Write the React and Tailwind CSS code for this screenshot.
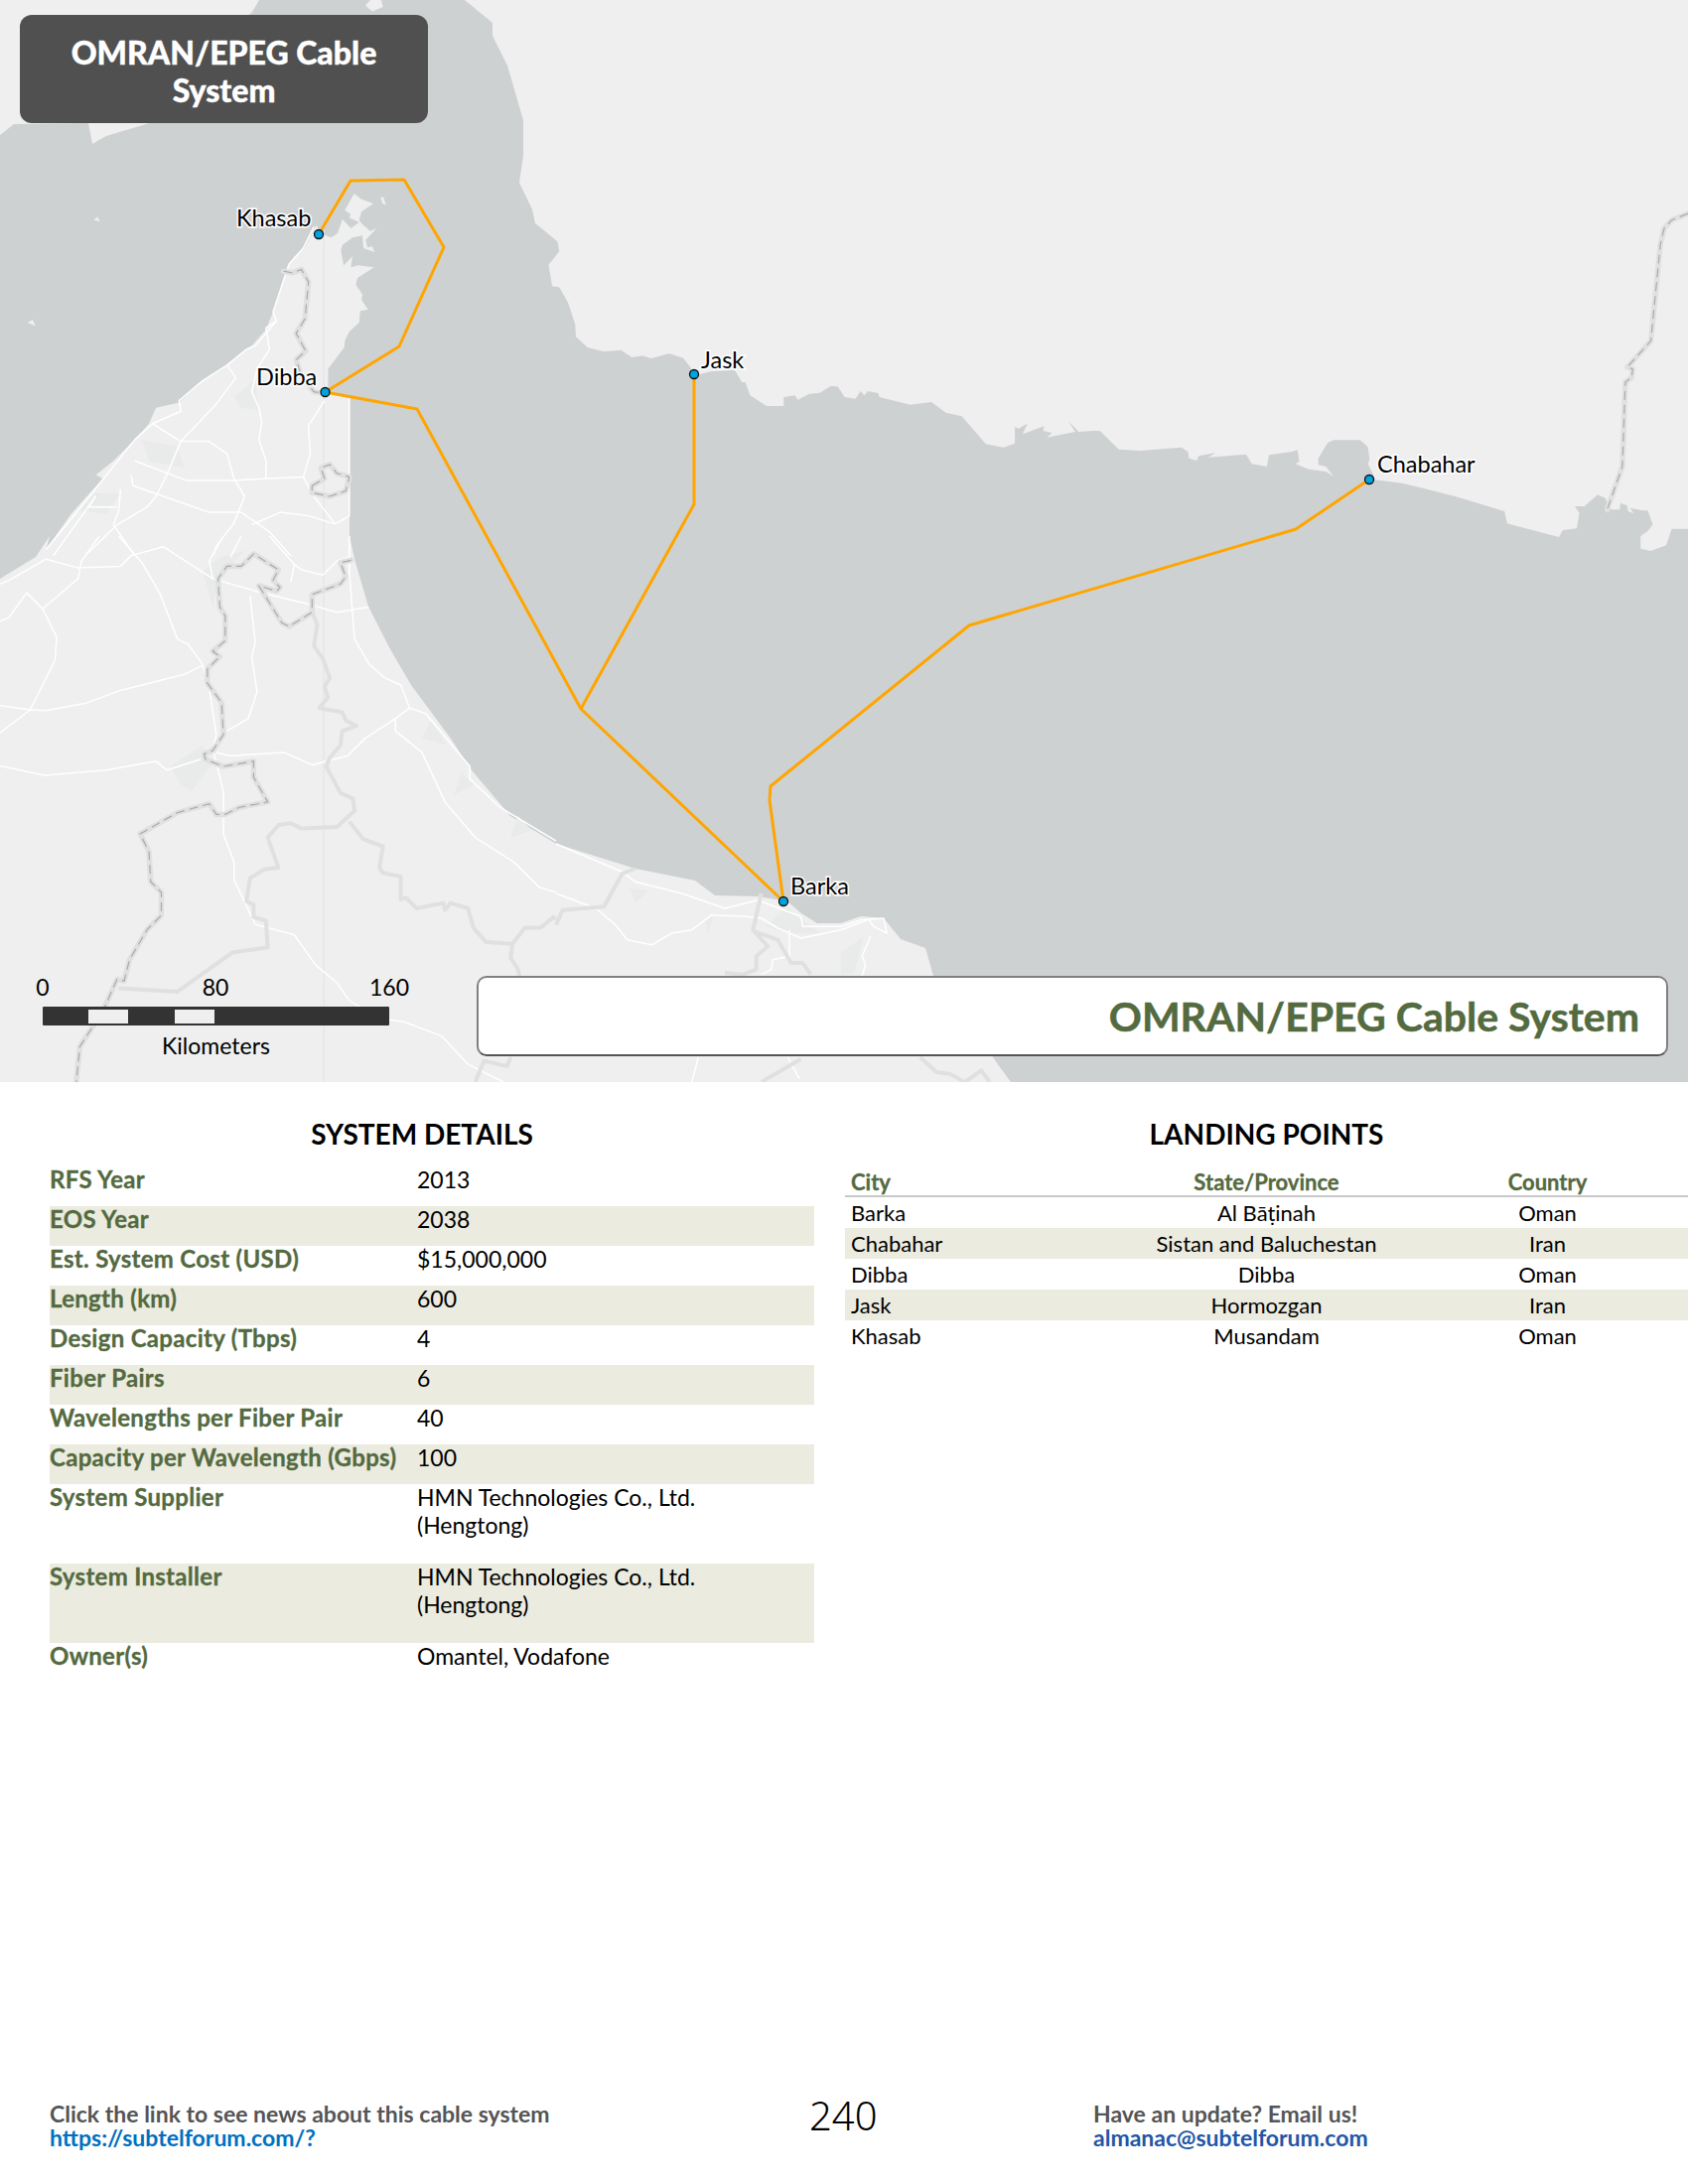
const font = { fontFamily: 'Lato, "Noto Sans", sans-serif' }

// helpers: the coordinates below were read off enlarged crops of the map
const z1 = pts => pts.map(([x, y]) => [x / 2.8, y / 2.8])
const z2 = pts => pts.map(([x, y]) => [x / 2.8, y / 2.8 + 540])
const z7 = pts => pts.map(([x, y]) => [1100 + x / 2.613, 180 + y / 3])
const z8 = pts => pts.map(([x, y]) => [560 + x / 3, 800 + y / 3])
const zA = pts => pts.map(([x, y]) => [290 + x / 3, 180 + y / 3])
const zB = pts => pts.map(([x, y]) => [540 + x / 2.8, 230 + y / 3])
const line = pts => 'M' + pts.map(p => p[0].toFixed(1) + ' ' + p[1].toFixed(1)).join('L')
const poly = pts => line(pts) + 'Z'

const water = [
  [468, 0], [496, 23], [496, 36], [511, 66], [527, 121], [527, 157], [523, 184], [536, 211], [539, 225],
  ...zB([[15, 0], [60, 40], [65, 70], [35, 110], [45, 175], [65, 178], [90, 225], [110, 290], [112, 328], [145, 360], [190, 372], [240, 368],
    [270, 390], [300, 385], [325, 393], [375, 378], [415, 392], [435, 420], [447, 445], [495, 432], [560, 428], [580, 465], [590, 465], [603, 505],
    [650, 537], [698, 537], [698, 510], [730, 505], [738, 518], [770, 500], [800, 497], [830, 477], [850, 478], [870, 510], [900, 515], [915, 492],
    [925, 505], [935, 492], [965, 498], [968, 510], [1055, 533], [1115, 525], [1155, 557], [1200, 568], [1268, 652], [1318, 662], [1350, 650],
    [1350, 600], [1360, 605], [1385, 590], [1372, 622], [1432, 598], [1430, 612], [1455, 618], [1440, 632], [1520, 615], [1500, 582], [1530, 615], [1568, 612]]),
  ...z7([[20, 762], [70, 818], [125, 822], [235, 812], [252, 825], [255, 845], [275, 852], [280, 838], [325, 828], [305, 842],
    [405, 833], [420, 862], [460, 870], [465, 835], [525, 825], [540, 820], [545, 855], [535, 862], [570, 878], [615, 885], [635, 900],
    [615, 870], [595, 865], [595, 845], [620, 797], [635, 790], [705, 790], [725, 810], [730, 850], [725, 860], [738, 890], [745, 910],
    [815, 920], [870, 935], [955, 960], [1085, 1005], [1092, 1042], [1228, 1083], [1238, 1062], [1275, 1057], [1282, 1010], [1270, 990],
    [1295, 990], [1330, 955], [1350, 965], [1365, 1000], [1388, 1000], [1390, 980], [1408, 988], [1410, 1005], [1425, 1012], [1415, 995],
    [1450, 1003], [1462, 1003], [1475, 1045], [1462, 1065], [1443, 1080], [1443, 1118], [1470, 1125], [1510, 1108], [1525, 1058], [1568, 1058]]),
  [1700, 1090], [1018, 1090], [1007, 1075], [1000, 1065], [940, 983], [932, 955], [907, 946], [890, 925], [867, 923], [847, 930], [823, 930],
  [807, 920], [793, 908], [763, 903], [720, 902], [700, 887], [640, 875], [560, 850], [514, 822], [475, 776], [454, 744], [414, 690],
  [393, 654], [371, 611], [357, 563], [352, 540], [352, 400],
  ...z1([[925, 1110], [925, 1040]]),
  ...zA([[170, 510], [172, 490], [185, 462], [215, 435], [218, 400], [242, 395], [222, 365], [225, 350], [205, 320], [210, 300], [260, 268], [212, 262],
    [190, 268], [195, 235], [168, 262], [160, 215], [165, 200], [195, 178], [225, 172], [228, 210], [262, 222], [255, 205], [240, 208], [235, 185],
    [268, 150], [248, 158], [222, 135], [215, 125], [222, 100], [258, 75], [222, 62], [200, 45], [172, 95], [190, 108], [185, 118], [215, 132],
    [190, 150], [165, 122], [150, 165], [130, 178], [100, 165], [85, 140], [50, 210], [20, 235], [0, 265]]),
  ...z1([[800, 790], [770, 880], [750, 930], [710, 975], [640, 1030],
    [570, 1075], [505, 1135], [440, 1150], [420, 1195], [380, 1240], [320, 1300], [270, 1340], [290, 1350], [200, 1450], [130, 1550]]),
  [50, 540], [36, 561], [0, 583], [0, 136], [14, 125], [89, 124], [93, 145], [107, 137], [154, 123], [200, 60], [254, 12], [261, 0],
]

const islands = [
  z1([[1030, 15], [1045, 0], [1075, 0], [1080, 20], [1050, 32]]),
  z1([[265, 620], [275, 612], [282, 625]]),
  z1([[78, 910], [92, 902], [100, 920]]),
  z7([[1305, 935], [1315, 925], [1325, 960], [1315, 955]]),
  zA([[280, 58], [288, 55], [296, 80], [286, 75]]),
]

const patches = [
  z1([[660, 1120], [720, 1070], [730, 1160], [680, 1150]]),
  z1([[400, 1240], [500, 1260], [520, 1320], [420, 1300]]),
  z1([[270, 1390], [340, 1390], [300, 1450], [220, 1440]]),
  z2([[480, 650], [570, 590], [600, 640], [540, 720], [510, 700]]),
  z2([[570, 100], [620, 60], [690, 40], [620, 120], [600, 200]]),
  z2([[1190, 570], [1215, 520], [1260, 590]]),
  z2([[1280, 730], [1300, 670], [1340, 700]]),
  z2([[1440, 850], [1460, 790], [1500, 830]]),
  z8([[220, 285], [280, 290], [240, 330]]),
  z8([[450, 380], [475, 370], [460, 425]]),
  z8([[630, 400], [700, 340], [740, 380], [800, 420], [700, 420]]),
  z8([[860, 480], [930, 430], [900, 540], [860, 545]]),
]

const roads = [
  z1([[885, 640], [855, 700], [815, 745], [800, 790], [770, 880], [780, 905], [750, 925], [760, 985], [725, 1040], [710, 1105], [730, 1150], [738, 1190], [730, 1240], [750, 1300], [750, 1350]]),
  z1([[780, 905], [720, 975], [695, 985], [640, 1030], [570, 1075], [505, 1130], [510, 1160], [430, 1195], [380, 1240], [300, 1340], [220, 1440], [130, 1550]]),
  z1([[640, 1030], [665, 1065], [610, 1140], [510, 1245], [590, 1245], [640, 1280], [660, 1350], [690, 1400], [660, 1475], [610, 1540], [600, 1568]]),
  z1([[430, 1195], [510, 1245], [470, 1340], [440, 1400], [415, 1430], [330, 1480], [240, 1568]]),
  z1([[380, 1300], [525, 1355], [660, 1355], [750, 1350], [855, 1345], [885, 1400], [945, 1478]]),
  z1([[915, 1130], [870, 1200], [875, 1280], [855, 1345]]),
  z1([[370, 1340], [375, 1370], [590, 1445], [680, 1445], [760, 1500], [820, 1568]]),
  z1([[340, 1380], [335, 1440], [320, 1480], [380, 1568]]),
  z1([[270, 1400], [250, 1430], [330, 1430]]),
  z1([[270, 1400], [150, 1568]]),
  z1([[945, 1478], [985, 1455], [985, 1120]]),
  z1([[710, 1480], [790, 1445], [870, 1455], [945, 1478]]),
  z2([[0, 135], [25, 125], [130, 65], [220, 90], [340, 85], [370, 55], [460, 30], [600, 120], [720, 155], [880, 195], [950, 215], [1040, 200]]),
  z2([[335, 0], [400, 75], [450, 160], [500, 290], [530, 305], [570, 360], [590, 430], [610, 560], [600, 600], [630, 720], [630, 840], [660, 920], [660, 970], [720, 1095], [830, 1125], [890, 1210], [950, 1260], [985, 1310], [1070, 1360], [1140, 1370], [1245, 1410], [1320, 1490], [1420, 1540]]),
  z2([[0, 240], [25, 230], [75, 160], [120, 205], [160, 285], [155, 350], [85, 490], [0, 555]]),
  z2([[0, 478], [85, 490], [130, 492], [240, 472], [340, 435], [520, 390], [570, 365]]),
  z2([[120, 205], [220, 120], [230, 70], [280, 0]]),
  z2([[0, 648], [125, 675], [300, 660], [440, 635], [470, 660], [565, 630]]),
  z2([[610, 610], [650, 620], [800, 610], [880, 645], [980, 620], [1030, 570], [1115, 515], [1155, 485], [1200, 500], [1325, 650], [1325, 685], [1410, 765], [1568, 860]]),
  z2([[1155, 485], [1130, 420], [1085, 400], [1040, 360], [1000, 290], [985, 100], [985, 0]]),
  z2([[1115, 515], [1115, 550], [1190, 610], [1255, 750], [1340, 850], [1450, 920], [1520, 990], [1568, 1005]]),
  z2([[640, 550], [700, 515], [725, 440], [710, 340], [720, 300], [705, 170]]),
  z2([[600, 120], [590, 70], [630, 0]]),
  z2([[680, 0], [650, 60]]),
  z2([[760, 0], [830, 80], [820, 130]]),
  z2([[830, 80], [850, 95], [910, 110], [950, 70], [985, 60]]),
  z8([[0, 150], [200, 235], [240, 265], [380, 300], [510, 345], [610, 320], [740, 370], [745, 400], [860, 400], [920, 380], [990, 375], [1000, 420], [960, 400], [945, 380]]),
  z8([[0, 300], [120, 345], [180, 395], [215, 440], [290, 455], [350, 420], [410, 410], [470, 365], [580, 370], [620, 375], [670, 405], [740, 435], [860, 410], [940, 380]]),
  z8([[705, 410], [705, 490], [655, 500], [650, 530], [620, 545]]),
  z8([[950, 430], [925, 490], [935, 515], [925, 550]]),
  z8([[430, 795], [410, 870]]),
  z8([[700, 795], [735, 860]]),
]

const borders = [
  z2([[880, 215], [895, 250], [885, 310], [910, 345], [930, 400], [915, 425], [925, 455], [900, 485], [965, 497], [975, 520], [1005, 535], [965, 550], [960, 590], [930, 625], [920, 650], [960, 725], [995, 740], [1000, 775], [950, 820], [850, 825], [820, 810], [785, 815], [755, 850], [785, 935], [745, 940], [705, 965], [695, 1030], [715, 1040], [715, 1075], [750, 1085], [755, 1160], [655, 1175], [500, 1285], [335, 1275]]),
  z2([[985, 805], [1025, 855], [1080, 875], [1070, 935], [1080, 950], [1130, 960], [1130, 1025], [1145, 1020], [1175, 1050], [1250, 1035], [1255, 1055], [1270, 1035], [1320, 1050], [1335, 1105], [1370, 1145], [1445, 1150], [1480, 1105], [1525, 1105], [1560, 1075], [1568, 1080]]),
  z2([[1445, 1150], [1440, 1190], [1460, 1220], [1465, 1240]]),
  z2([[1340, 1540], [1365, 1480], [1430, 1495], [1440, 1470]]),
  z8([[240, 225], [200, 240], [145, 340], [20, 350], [0, 395]]),
  z8([[620, 300], [595, 410], [640, 460], [605, 490], [605, 530], [565, 545], [510, 540]]),
  z8([[600, 415], [670, 440], [710, 510], [745, 510], [770, 545]]),
  z8([[620, 870], [740, 800]]),
  z8([[1100, 795], [1150, 840], [1190, 845], [1235, 870], [1285, 835], [1310, 870]]),
]

const dashed = [
  z2([[990, 68], [960, 75], [975, 115], [960, 135], [880, 165], [880, 215], [815, 255], [795, 245], [730, 140], [780, 155], [790, 145], [770, 125], [785, 95], [715, 50], [680, 85], [640, 85], [615, 120], [620, 200], [635, 225], [635, 295], [600, 325], [620, 340], [585, 375], [585, 415], [625, 470], [630, 560], [600, 605], [575, 615], [580, 630], [630, 650], [715, 635], [715, 680], [755, 750], [675, 765], [635, 785], [610, 785], [590, 755], [500, 780], [395, 840], [420, 890], [425, 975], [455, 1005], [455, 1070], [415, 1110], [365, 1195], [350, 1255], [330, 1250], [290, 1340], [225, 1440], [215, 1540]]),
  z1([[800, 765], [825, 770], [850, 760], [870, 795], [860, 900], [835, 940], [862, 990], [835, 1015], [850, 1060], [885, 1105], [917, 1110]]),
  z1([[880, 1370], [915, 1350], [905, 1320], [930, 1310], [950, 1335], [985, 1345], [975, 1385], [930, 1400], [880, 1390], [880, 1370]]),
  z7([[1568, 105], [1525, 125], [1505, 150], [1495, 200], [1470, 490], [1408, 570], [1422, 575], [1420, 600], [1403, 615], [1395, 870], [1355, 1000]]),
]

const cables = [
  [[321, 236], [353, 182], [407, 181], [447, 249], [402, 349], [327.5, 395]],
  [[327.5, 395], [420, 412], [585, 714], [789, 908]],
  [[699, 377], [699, 508], [585, 714]],
  [[1379, 483], [1305, 533], [976, 630], [776, 792], [775, 806], [789, 908]],
]

const landings = [
  { name: 'Khasab', at: [321, 236], label: [238, 228] },
  { name: 'Dibba', at: [327.5, 395], label: [258, 388] },
  { name: 'Jask', at: [699, 377], label: [706, 371] },
  { name: 'Chabahar', at: [1379, 483], label: [1387, 476] },
  { name: 'Barka', at: [789, 908], label: [796, 901] },
]

const details = [
  ['RFS Year', '2013'],
  ['EOS Year', '2038'],
  ['Est. System Cost (USD)', '$15,000,000'],
  ['Length (km)', '600'],
  ['Design Capacity (Tbps)', '4'],
  ['Fiber Pairs', '6'],
  ['Wavelengths per Fiber Pair', '40'],
  ['Capacity per Wavelength (Gbps)', '100'],
  ['System Supplier', 'HMN Technologies Co., Ltd. (Hengtong)', true],
  ['System Installer', 'HMN Technologies Co., Ltd. (Hengtong)', true],
  ['Owner(s)', 'Omantel, Vodafone'],
]

const points = [
  ['Barka', 'Al Bāṭinah', 'Oman'],
  ['Chabahar', 'Sistan and Baluchestan', 'Iran'],
  ['Dibba', 'Dibba', 'Oman'],
  ['Jask', 'Hormozgan', 'Iran'],
  ['Khasab', 'Musandam', 'Oman'],
]

function CableMap() {
  return (
    <svg viewBox="0 0 1700 1090" className="absolute inset-0 w-[1700px] h-[1090px]">
      <rect width="1700" height="1090" fill="#efefef" />
      <path d={poly(water)} fill="#ced1d2" />
      {islands.map((p, i) => <path key={i} d={poly(p)} fill="#efefef" />)}
      {patches.map((p, i) => <path key={i} d={poly(p)} fill="#e9ebea" />)}
      <path d="M326 232V1090" stroke="#e2e2e2" strokeWidth="1" fill="none" />
      {roads.map((p, i) => <path key={i} d={line(p)} stroke="#fff" strokeWidth="1.5" fill="none" strokeLinejoin="round" />)}
      {borders.map((p, i) => <path key={i} d={line(p)} stroke="#e0e0e0" strokeWidth="4" fill="none" strokeLinejoin="round" />)}
      {dashed.map((p, i) => <path key={i} d={line(p)} stroke="#e0e0e0" strokeWidth="5.5" fill="none" strokeLinejoin="round" strokeLinecap="round" />)}
      {dashed.map((p, i) => <path key={i} d={line(p)} stroke="#aaaaaa" strokeWidth="1.2" fill="none" strokeDasharray="9 5" />)}
      {cables.map((p, i) => <path key={i} d={line(p)} stroke="#ffa500" strokeWidth="3" fill="none" strokeLinejoin="round" />)}
      {landings.map(l => (
        <g key={l.name}>
          <circle cx={l.at[0]} cy={l.at[1]} r="4.5" fill="#00a2e0" stroke="#111" strokeWidth="1.3" />
          <text x={l.label[0]} y={l.label[1]} fontSize="23.5" fill="#000" stroke="#fff" strokeWidth="3" paintOrder="stroke" style={font}>{l.name}</text>
        </g>
      ))}
    </svg>
  )
}

function ScaleBar() {
  return (
    <div className="absolute left-[43px] top-[982px] w-[349px] text-[23px] leading-[25px] text-black">
      <div className="relative h-[25px]">
        <span className="absolute left-0 -translate-x-1/2">0</span>
        <span className="absolute left-[174px] -translate-x-1/2">80</span>
        <span className="absolute left-[349px] -translate-x-1/2">160</span>
      </div>
      <div className="relative h-[19px] mt-[7px] bg-[#333] rounded-[1px]">
        <div className="absolute left-[46px] top-[3px] w-[40px] h-[14px] bg-[#efefef]" />
        <div className="absolute left-[133px] top-[3px] w-[40px] h-[14px] bg-[#efefef]" />
      </div>
      <div className="text-center mt-[8px]">Kilometers</div>
    </div>
  )
}

export default function App() {
  return (
    <div className="w-[1700px] h-[2200px] bg-white flex flex-col" style={font}>
      <div className="relative w-full h-[1090px] overflow-hidden shrink-0">
        <CableMap />
        <div className="absolute left-[20px] top-[15px] w-[411px] h-[109px] pt-[5px] rounded-[12px] bg-[#505050] text-white text-center text-[32px] leading-[38px] font-black flex items-center justify-center px-8 [-webkit-text-stroke:0.4px_#fff]">
          OMRAN/EPEG Cable System
        </div>
        <ScaleBar />
        <div className="absolute left-[480px] top-[983px] w-[1200px] h-[81px] rounded-[10px] bg-white border-2 border-[#808080] border-b-[#555] flex items-center justify-end pr-[27px] text-[41px] font-bold text-[#546a3f] [-webkit-text-stroke:0.5px_#546a3f]">
          OMRAN/EPEG Cable System
        </div>
      </div>

      <div className="flex pt-[36px] pl-[50px]">
        <div className="w-[770px]">
          <h2 className="text-[28px] leading-[32px] font-bold text-black text-center pr-[20px] mb-[17px]">SYSTEM DETAILS</h2>
          <table className="w-full table-fixed border-collapse text-[23px] leading-[28px]">
            <colgroup>
              <col className="w-[370px]" />
              <col />
            </colgroup>
            <tbody>
              {details.map(([label, value, tall], i) => (
                <tr key={label} className={`${tall ? 'h-[80px]' : 'h-[40px]'} ${i % 2 ? 'bg-[#ebebdf]' : ''}`}>
                  <td className="align-top font-bold text-[24px] tracking-[0.3px] text-[#546a3f] [-webkit-text-stroke:0.3px_#546a3f]">
                    <div className="-mt-px">{label}</div>
                  </td>
                  <td className="align-top text-black pr-[80px]">
                    <div className="-mt-px">{value}</div>
                  </td>
                </tr>
              ))}
            </tbody>
          </table>
        </div>

        <div className="w-[849px] ml-[31px]">
          <h2 className="text-[28px] leading-[32px] font-bold text-black text-center mb-[20px]">LANDING POINTS</h2>
          <table className="w-full table-fixed border-collapse text-[22px] leading-[31px] text-black">
            <thead>
              <tr className="border-b-2 border-[#c8c8c8] text-[#546a3f] [-webkit-text-stroke:0.3px_#546a3f]">
                <th className="text-left pl-[6px] font-bold leading-[26px]">City</th>
                <th className="text-center font-bold leading-[26px]">State/Province</th>
                <th className="text-center font-bold leading-[26px]">Country</th>
              </tr>
            </thead>
            <tbody>
              {points.map(([city, state, country], i) => (
                <tr key={city} className={i % 2 ? 'bg-[#ebebdf]' : ''}>
                  <td className="pl-[6px]">{city}</td>
                  <td className="text-center">{state}</td>
                  <td className="text-center">{country}</td>
                </tr>
              ))}
            </tbody>
          </table>
        </div>
      </div>

      <div className="mt-auto mb-[35px] pl-[50px] flex items-start text-[23px] leading-[24px] font-bold text-[#555]">
        <div className="w-[765px]">
          <div>Click the link to see news about this cable system</div>
          <div className="text-[#0070c0]">https://subtelforum.com/?</div>
        </div>
        <div className="w-[286px] -mt-[8px] text-[40px] leading-[44px] font-light text-black" style={{ fontFamily: '"Noto Sans", sans-serif' }}>240</div>
        <div>
          <div>Have an update? Email us!</div>
          <div className="text-[#1f57a6]">almanac@subtelforum.com</div>
        </div>
      </div>
    </div>
  )
}
